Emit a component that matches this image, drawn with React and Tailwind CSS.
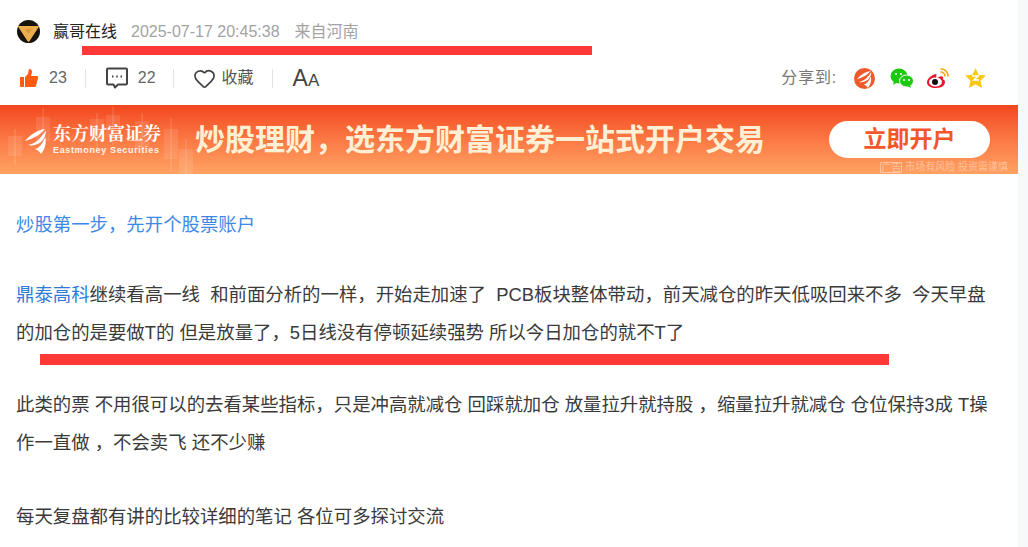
import { Heart } from "lucide-react";

const FONT = "font-['Liberation_Sans','Noto_Sans_CJK_SC',sans-serif]";

const CANDLES = [
  { left: 8, top: 31, height: 20, wick: [24, 60] },
  { left: 36, top: 12, height: 24, wick: [3, 44] },
  { left: 90, top: 14, height: 22, wick: [8, 44] },
  { left: 106, top: 10, height: 22, wick: [2, 40] },
  { left: 135, top: 16, height: 28, wick: [8, 50] },
  { left: 164, top: 24, height: 30, wick: [13, 66] },
  { left: 179, top: 44, height: 25, wick: [34, 69] },
];

const Wings = ({ color = "#fff" }) => (
  <g fill={color}>
    <path d="M0 12C5 6 12 1 20 0c-3 3-6 6-8 7-4 2-8 4-12 5z" />
    <path d="M3 16c5-1 10-4 13-8 2-2 4-5 5-7 0 5-2 9-5 12-4 3-9 4-13 3z" />
    <path d="M10 20c4-1 8-5 10-12 2 5 0 12-4 17-1-2-3-4-6-5z" />
  </g>
);

const ShareIcons = () => (
  <div className="flex items-center gap-[15px]">
    <svg width="21" height="21" viewBox="0 0 21 21">
      <circle cx="10.500" cy="10.500" r="10.500" fill="#ee5a2b" />
      <g transform="translate(3 3) scale(0.68)">
        <Wings />
      </g>
    </svg>
    <svg width="24" height="21" viewBox="0 0 24 21">
      <ellipse cx="9" cy="8" rx="8.500" ry="7.500" fill="#1dc90f" />
      <path d="M4 13l-1 4 5-3z" fill="#1dc90f" />
      <ellipse cx="16.500" cy="13" rx="7" ry="6" fill="#1dc90f" stroke="#fff" strokeWidth="1" />
      <path d="M20 17l1 3-4-2z" fill="#1dc90f" />
      <circle cx="6" cy="6" r="1" fill="#fff" />
      <circle cx="11" cy="6" r="1" fill="#fff" />
      <circle cx="14" cy="12" r="1" fill="#fff" />
      <circle cx="19" cy="12" r="1" fill="#fff" />
    </svg>
    <svg width="23" height="21" viewBox="0 0 23 21" className="-ml-[2px]">
      <path d="M9 6C4 7 0 11 0 14.500 0 18 4 20 9 20c6 0 9-3 9-6 0-2-2-2.500-2-3 1-3-2-4-7 0 .5-3 .5-5 0-5z" fill="#e6162d" />
      <ellipse cx="8.500" cy="14" rx="6.500" ry="4.500" fill="#fff" />
      <circle cx="8" cy="14" r="3" fill="#111" />
      <path d="M14 1c4 0 7 3 7 7M14 4c2 0 4 2 4 4" fill="none" stroke="#f7a21b" strokeWidth="1.600" strokeLinecap="round" />
    </svg>
    <svg width="21" height="20" viewBox="0 0 21 20">
      <path d="M10.500 0l3 6.700 7.500.8-5.500 5 1.500 7.500-6.500-3.800L4 20l1.500-7.500L0 7.500l7.500-.8z" fill="#fcc70f" />
      <path d="M7 8h6l-4 4h5" fill="none" stroke="#fff" strokeWidth="1.600" />
    </svg>
  </div>
);

const Banner = () => (
  <div className="relative h-[69px] overflow-hidden bg-gradient-to-b from-[#f3451d] to-[#ffa263]">
    {CANDLES.map((candle) => (
      <div key={candle.left}>
        <div
          className="absolute w-[14px] bg-white/10"
          style={{ left: candle.left, top: candle.top, height: candle.height }}
        />
        <div
          className="absolute w-[2px] bg-white/10"
          style={{ left: candle.left + 6, top: candle.wick[0], height: candle.wick[1] - candle.wick[0] }}
        />
      </div>
    ))}
    <div className="relative flex h-full items-center">
      <svg className="ml-[25px] mt-[3px]" width="22" height="25" viewBox="0 0 22 25">
        <Wings />
      </svg>
      <div className="ml-[6px] flex flex-col text-white">
        <span className="text-[18px] leading-[22px] font-bold font-['Liberation_Serif','Noto_Serif_CJK_SC','Noto_Sans_CJK_SC',serif]">东方财富证券</span>
        <span className="text-[9px] leading-[11px] font-bold tracking-[0.65px] text-white/90">Eastmoney Securities</span>
      </div>
      <span className="ml-[34px] text-[30px] font-bold whitespace-nowrap text-[#fff0d5]">炒股理财，选东方财富证券一站式开户交易</span>
      <div className="ml-auto mr-[28px] flex h-[37px] w-[161px] items-center justify-center rounded-full bg-white text-[23px] font-bold text-[#f4562a]">
        立即开户
      </div>
    </div>
    <div className="absolute right-[10px] bottom-[1px] flex items-center gap-[3px] text-[10px] leading-[12px] text-white/40">
      <span className="rounded-[1px] border border-white/40 leading-[9px]">广告</span>
      <span>市场有风险 投资需谨慎</span>
    </div>
  </div>
);

const Divider = () => <div className="h-[19px] w-px bg-[#e2e2e2]" />;

const App = () => {
  return (
    <div className={`${FONT} relative h-[547px] w-[1028px] overflow-hidden bg-[#f6f8fa]`}>
      <div className="h-full w-[1018px] bg-white">
        <div className="flex h-[63px] items-center pl-[17px] text-[16px]">
          <svg width="23" height="23" viewBox="0 0 23 23">
            <circle cx="11.500" cy="11.500" r="11.500" fill="#15130c" />
            <path d="M1.500 6h20a.5.5 0 0 1 .4.8l-9.500 14.500a1 1 0 0 1-1.800 0L1.100 6.800A.5.5 0 0 1 1.500 6z" fill="#ecae4c" />
            <path d="M8 9h7l-3.500 5z" fill="#d6963a" />
          </svg>
          <span className="ml-[13px] text-[#222]">赢哥在线</span>
          <span className="ml-[14px] text-[#a3a3a3]">2025-07-17 20:45:38</span>
          <span className="ml-[15px] text-[#a3a3a3]">来自河南</span>
        </div>

        <div className="flex h-[42px] items-start pl-[20px] pr-[32px] text-[16px] text-[#666]">
          <div className="flex h-[30px] items-center">
            <svg width="18" height="18" viewBox="0 0 18 18">
              <path d="M0 8h4v10H1a1 1 0 0 1-1-1z" fill="#ff5a11" />
              <path d="M5 8l3-3 1-5c2 0 3 1 3 3l-1 4h6c1 0 1.500 1 1 2l-2 8c0 .5-1 1-2 1H5z" fill="#ff5a11" />
            </svg>
            <span className="ml-[11px]">23</span>
            <div className="ml-[18px]"><Divider /></div>
            <svg className="ml-[20px]" width="22" height="22" viewBox="0 0 22 22" fill="none" stroke="#444" strokeWidth="2">
              <path d="M2 1.500h18a1 1 0 0 1 1 1v14a1 1 0 0 1-1 1h-8l-3 3-1.500-3H2a1 1 0 0 1-1-1v-14a1 1 0 0 1 1-1z" strokeLinejoin="round" />
              <path d="M6 9.500h1.500M10.200 9.500h1.500M14.500 9.500H16" />
            </svg>
            <span className="ml-[10px]">22</span>
            <div className="ml-[17px]"><Divider /></div>
            <Heart className="ml-[19px]" size={23} stroke="#444" strokeWidth={1.8} />
            <span className="ml-[6px] text-[#555]">收藏</span>
            <div className="ml-[18px]"><Divider /></div>
            <div className="ml-[20px] flex items-baseline text-[#444]">
              <span className="text-[23px] leading-none">A</span>
              <span className="text-[17px] leading-none">A</span>
            </div>
          </div>
          <div className="ml-auto flex h-[30px] items-center">
            <span className="mr-[17px] tracking-[0.8px] text-[#777]">分享到:</span>
            <ShareIcons />
          </div>
        </div>

        <Banner />

        <div className="pl-[16px] pr-[25px] pt-[32px] text-[18.4px] leading-[38px] text-[#3a3a3a]">
          <p className="text-[#3d88e6]">炒股第一步，先开个股票账户</p>
          <p className="mt-[32px]">
            <span className="text-[#2f7bdc]">鼎泰高科</span>继续看高一线&nbsp; 和前面分析的一样，开始走加速了&nbsp; PCB板块整体带动，前天减仓的昨天低吸回来不多&nbsp; 今天早盘的加仓的是要做T的 但是放量了，5日线没有停顿延续强势 所以今日加仓的就不T了
          </p>
          <p className="mt-[34px]">
            此类的票 不用很可以的去看某些指标，只是冲高就减仓 回踩就加仓 放量拉升就持股 ，缩量拉升就减仓 仓位保持3成 T操作一直做 ，不会卖飞 还不少赚
          </p>
          <p className="mt-[36px]">每天复盘都有讲的比较详细的笔记 各位可多探讨交流</p>
        </div>
      </div>

      {/* annotation bars on top of the page */}
      <div className="absolute left-[82px] top-[46px] h-[9px] w-[510px] bg-[#ff3838]" />
      <div className="absolute left-[40px] top-[354px] h-[11px] w-[849px] bg-[#ff3838]" />
    </div>
  );
};

export default App;
